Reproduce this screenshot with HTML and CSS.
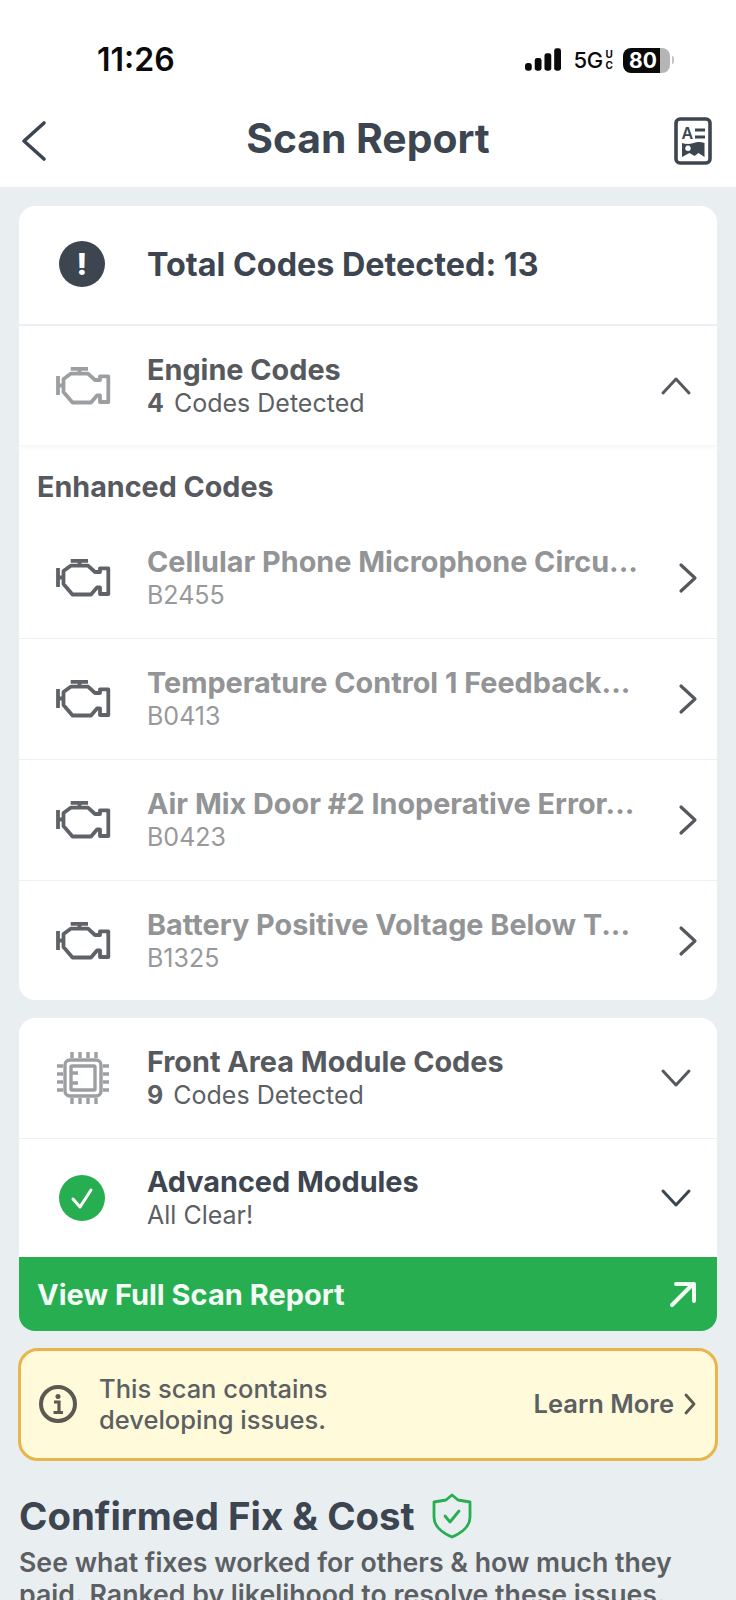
FILE: index.html
```html
<!DOCTYPE html>
<html lang="en">
<head>
  <meta charset="UTF-8" />
  <title>Scan Report</title>
  <link rel="stylesheet" href="styles.css">
</head>
<body>
  <svg class="defs" width="0" height="0">
    <symbol id="engine" viewBox="0 0 56 38">
      <path d="M3 9v19M3 18.500h5.500M15.700 6.700L8.500 12v13l9 10.500H36l6-7h3V35h8.300V9.300H45V13h-5l-7-6.300zM15.700 1.800H33M24.500 1.800v5" fill="none" stroke="currentColor" stroke-width="3.800" stroke-linejoin="round"/>
    </symbol>
    <symbol id="chev-right" viewBox="0 0 20 32">
      <path d="M3 3l14 13L3 29" fill="none" stroke="currentColor" stroke-width="3.200" stroke-linecap="round" stroke-linejoin="round"/>
    </symbol>
    <symbol id="chev-down" viewBox="0 0 32 20">
      <path d="M3 3l13 14L29 3" fill="none" stroke="currentColor" stroke-width="3" stroke-linecap="round" stroke-linejoin="round"/>
    </symbol>
  </svg>

  <div class="status">
    <span class="time">11:26</span>
    <div class="status-right">
      <svg class="signal" width="36" height="24" viewBox="0 0 37 24"><rect x="0" y="15" width="7" height="8" rx="3"/><rect x="10" y="10" width="7" height="13" rx="2.500"/><rect x="20" y="5" width="7" height="18" rx="2.500"/><rect x="30" y="0" width="7" height="23" rx="2.500"/></svg>
      <span class="net">5G</span>
      <span class="net-uc"><span>U</span><span>C</span></span>
      <div class="battery"><span>80</span></div>
      <span class="battery-tip"></span>
    </div>
  </div>

  <header class="topbar">
    <svg class="back" width="26" height="42" viewBox="0 0 26 42"><path d="M23 3L3 21l20 18" fill="none" stroke="#3c4550" stroke-width="3.600" stroke-linecap="round" stroke-linejoin="round"/></svg>
    <h1>Scan Report</h1>
    <svg class="report-icon" width="38" height="48" viewBox="0 0 38 48">
      <rect x="2" y="2" width="34" height="44" rx="4" fill="none" stroke="#3c4550" stroke-width="3.600"/>
      <text x="7.500" y="22" class="report-a">A</text>
      <path d="M21 13h10M21 20h10" stroke="#3c4550" stroke-width="3"/>
      <path fill-rule="evenodd" d="M8 26q6 2 11.500 0t11 0v14l-6-4-4 3-5-3-7.500 4zM14 28.500a2.800 2.800 0 1 0 .01 0z" fill="#3c4550"/>
    </svg>
  </header>

  <main class="content">
    <section class="card">
      <div class="row row-total">
        <div class="row-icon">
          <span class="alert">!</span>
        </div>
        <div class="total-text">Total Codes Detected: 13</div>
      </div>
      <div class="row row-open">
        <div class="row-icon light"><svg width="56" height="38"><use href="#engine"/></svg></div>
        <div class="row-text">
          <div class="row-title muted">Engine Codes</div>
          <div class="row-sub"><b>4</b> Codes Detected</div>
        </div>
        <svg class="chev-up" width="32" height="20"><use href="#chev-down"/></svg>
      </div>
      <div class="group-label">Enhanced Codes</div>
      <div class="row code">
        <div class="row-icon"><svg width="56" height="38"><use href="#engine"/></svg></div>
        <div class="row-text">
          <div class="row-title faded">Cellular Phone Microphone Circu...</div>
          <div class="row-sub faded-sub">B2455</div>
        </div>
        <svg class="chev" width="20" height="32"><use href="#chev-right"/></svg>
      </div>
      <div class="row code">
        <div class="row-icon"><svg width="56" height="38"><use href="#engine"/></svg></div>
        <div class="row-text">
          <div class="row-title faded">Temperature Control 1 Feedback...</div>
          <div class="row-sub faded-sub">B0413</div>
        </div>
        <svg class="chev" width="20" height="32"><use href="#chev-right"/></svg>
      </div>
      <div class="row code">
        <div class="row-icon"><svg width="56" height="38"><use href="#engine"/></svg></div>
        <div class="row-text">
          <div class="row-title faded">Air Mix Door #2 Inoperative Error...</div>
          <div class="row-sub faded-sub">B0423</div>
        </div>
        <svg class="chev" width="20" height="32"><use href="#chev-right"/></svg>
      </div>
      <div class="row code code-last">
        <div class="row-icon"><svg width="56" height="38"><use href="#engine"/></svg></div>
        <div class="row-text">
          <div class="row-title faded">Battery Positive Voltage Below T...</div>
          <div class="row-sub faded-sub">B1325</div>
        </div>
        <svg class="chev" width="20" height="32"><use href="#chev-right"/></svg>
      </div>
    </section>

    <section class="card card-second">
      <div class="row">
        <div class="row-icon light">
          <svg width="56" height="54" viewBox="0 0 54 54" fill="none" stroke="currentColor" stroke-width="3.400">
            <rect x="9" y="9" width="36" height="36" rx="5"/>
            <rect x="15" y="15" width="24" height="24" rx="1"/>
            <path d="M15 22h7M15 32h7"/>
            <path d="M16 1v6M24 1v6M32 1v6M40 1v6M16 47v6M24 47v6M32 47v6M40 47v6M1 15h6M1 23h6M1 31h6M1 39h6M47 15h6M47 23h6M47 31h6M47 39h6"/>
          </svg>
        </div>
        <div class="row-text">
          <div class="row-title muted">Front Area Module Codes</div>
          <div class="row-sub"><b>9</b> Codes Detected</div>
        </div>
        <svg class="chev-down" width="32" height="20"><use href="#chev-down"/></svg>
      </div>
      <div class="row row-last">
        <div class="row-icon">
          <svg class="check" width="46" height="46" viewBox="0 0 46 46"><circle cx="23" cy="23" r="23" fill="#27ae50"/><path d="M14 24l7 8 11-17" fill="none" stroke="#fff" stroke-width="3" stroke-linecap="round" stroke-linejoin="round"/></svg>
        </div>
        <div class="row-text">
          <div class="row-title dark">Advanced Modules</div>
          <div class="row-sub">All Clear!</div>
        </div>
        <svg class="chev-down dark-chev" width="32" height="20"><use href="#chev-down"/></svg>
      </div>
      <div class="cta">
        <span>View Full Scan Report</span>
        <svg width="28" height="28" viewBox="0 0 28 28"><path d="M3 25L24 4M7 4h18v17" fill="none" stroke="#f2fbf4" stroke-width="4" stroke-linecap="round" stroke-linejoin="round"/></svg>
      </div>
    </section>

    <div class="notice">
      <svg width="38" height="38" viewBox="0 0 38 38"><circle cx="19" cy="19" r="17" fill="none" stroke="#5b5a52" stroke-width="4"/><circle cx="19" cy="11.500" r="2.500" fill="#5b5a52"/><path d="M15 17h5v10M14.500 27.500h9.500" fill="none" stroke="#5b5a52" stroke-width="3.200"/></svg>
      <div class="notice-text">This scan contains<br>developing issues.</div>
      <div class="learn">Learn More
        <svg width="12" height="22" viewBox="0 0 12 22"><path d="M2 2l8 9-8 9" fill="none" stroke="#5b5a52" stroke-width="2.800" stroke-linecap="round" stroke-linejoin="round"/></svg>
      </div>
    </div>

    <div class="fix-head">
      <h2>Confirmed Fix &amp; Cost</h2>
      <svg width="40" height="46" viewBox="0 0 40 46"><path d="M20 2l6 5 12 2v15c0 9-8 16-18 20C10 40 2 33 2 24V9l12-2z" fill="none" stroke="#27ae50" stroke-width="2.800" stroke-linejoin="round"/><path d="M13 23l5 6 9-11" fill="none" stroke="#27ae50" stroke-width="2.800" stroke-linecap="round" stroke-linejoin="round"/></svg>
    </div>
    <p class="fix-desc">See what fixes worked for others &amp; how much they paid. Ranked by likelihood to resolve these issues.</p>
  </main>
</body>
</html>
```

FILE: styles.css
```css
:root {
  --slate: #3c4550;
  --grey: #5c5f63;
  --page: #e9eef1;
  --green: #27ae50;
  --line: #eef0f2;
}

* {
  box-sizing: border-box;
}

html, body {
  margin: 0;
  height: 1600px;
  overflow: hidden;
}

body {
  font-family: Inter, "Liberation Sans", sans-serif;
  background: var(--page);
  color: var(--slate);
}

.defs {
  display: block;
  height: 0;
}

.status {
  height: 102px;
  background: #fff;
  display: flex;
  justify-content: space-between;
  align-items: flex-start;
  padding: 40px 62px 0 97px;
}

.time {
  font-size: 32px;
  font-weight: 600;
  line-height: 40px;
  color: #0a0a0a;
}

.status-right {
  display: flex;
  align-items: center;
  height: 40px;
}

.signal {
  fill: #0a0a0a;
  margin-right: 13px;
}

.net {
  font-size: 22px;
  font-weight: 500;
  letter-spacing: -0.5px;
  color: #0a0a0a;
}

.net-uc {
  display: flex;
  flex-direction: column;
  font-size: 10px;
  font-weight: 700;
  line-height: 11px;
  margin: 0 10px 0 3px;
  color: #0a0a0a;
}

.battery {
  width: 47px;
  height: 25px;
  border-radius: 8px;
  background: linear-gradient(to right, #0a0a0a 78%, #b5b5b5 78%);
  color: #fff;
  font-size: 21px;
  font-weight: 700;
  line-height: 25px;
  padding-left: 6px;
}

.battery-tip {
  width: 2px;
  height: 8px;
  margin-left: 2px;
  border-radius: 0 2px 2px 0;
  background: #c4c4c4;
}

.topbar {
  height: 85px;
  background: #fff;
  display: flex;
  align-items: center;
  justify-content: space-between;
  padding: 0 24px 8px 21px;
  position: relative;
}

.topbar h1 {
  position: absolute;
  left: 0;
  right: 0;
  top: 12px;
  margin: 0;
  text-align: center;
  font-size: 40.800px;
  line-height: 48px;
  font-weight: 700;
}

.content {
  padding: 19px 19px 0;
}

.card {
  background: #fff;
  border-radius: 16px;
  overflow: hidden;
}

.card-second {
  margin-top: 18px;
}

.row {
  display: flex;
  align-items: center;
  height: 121px;
  padding-right: 19px;
  border-bottom: 1px solid var(--line);
}

.row-last {
  height: 118px;
  border-bottom: none;
}

.row-total {
  height: 120px;
  padding-bottom: 2px;
  border-bottom: 2px solid var(--line);
}

.row-open {
  height: 119px;
  border-bottom: none;
  box-shadow: 0 2px 5px rgba(60, 69, 80, 0.06);
}

.code-last {
  height: 119px;
  border-bottom: none;
}

.row-icon {
  width: 128px;
  padding-left: 36px;
  height: 56px;
  display: flex;
  align-items: center;
  color: #5f6367;
  flex-shrink: 0;
}

.row-icon svg {
  display: block;
}

.row-icon.light {
  color: #9c9fa2;
}

.row-icon .check {
  margin-left: 4px;
}

.alert {
  width: 46px;
  height: 46px;
  margin-left: 4px;
  border-radius: 50%;
  background: var(--slate);
  color: #fff;
  font-size: 30px;
  font-weight: 800;
  text-align: center;
  line-height: 46px;
}

.total-text {
  font-size: 32.300px;
  font-weight: 700;
}

.row-text {
  flex: 1;
  min-width: 0;
}

.row-title {
  font-size: 28.800px;
  line-height: 34px;
  font-weight: 700;
  white-space: nowrap;
}

.row-sub {
  font-size: 25px;
  line-height: 32px;
  color: var(--grey);
}

.row-sub b {
  font-weight: 700;
  margin-right: 3px;
}

.muted {
  color: #56595d;
}

.dark {
  color: var(--slate);
}

.faded {
  color: #929496;
}

.faded-sub {
  color: #97999b;
}

.group-label {
  height: 73px;
  padding: 25px 0 0 18px;
  font-size: 28.700px;
  line-height: 34px;
  font-weight: 700;
  color: #56595d;
}

.chev {
  color: #55595e;
  flex-shrink: 0;
}

.chev-down {
  color: #55595e;
  margin-right: 6px;
  flex-shrink: 0;
}

.dark-chev {
  color: var(--slate);
}

.chev-up {
  color: #55595e;
  margin-right: 6px;
  flex-shrink: 0;
  transform: rotate(180deg);
}

.cta {
  height: 74px;
  background: var(--green);
  color: #f2fbf4;
  display: flex;
  align-items: center;
  justify-content: space-between;
  padding: 0 20px 0 18px;
  font-size: 29px;
  font-weight: 700;
}

.notice {
  margin: 17px -1px 0;
  height: 113px;
  background: #fffad9;
  border: 3px solid #e8b54c;
  border-radius: 20px;
  display: flex;
  align-items: center;
  padding: 0 19px 2px 18px;
  color: var(--grey);
}

.notice-text {
  flex: 1;
  margin-left: 22px;
  font-size: 25.500px;
  line-height: 31px;
  font-weight: 500;
}

.learn {
  display: flex;
  align-items: center;
  gap: 10px;
  font-size: 25.500px;
  font-weight: 600;
}

.fix-head {
  display: flex;
  align-items: center;
  gap: 17px;
  margin-top: 31px;
}

.fix-head h2 {
  margin: 0;
  font-size: 38.400px;
  line-height: 48px;
  font-weight: 700;
}

.fix-desc {
  margin: 6px 0 0;
  font-size: 26.700px;
  line-height: 32px;
  font-weight: 600;
  color: var(--grey);
}

.report-a {
  font-size: 16px;
  font-weight: 600;
  fill: #3c4550;
}
```
